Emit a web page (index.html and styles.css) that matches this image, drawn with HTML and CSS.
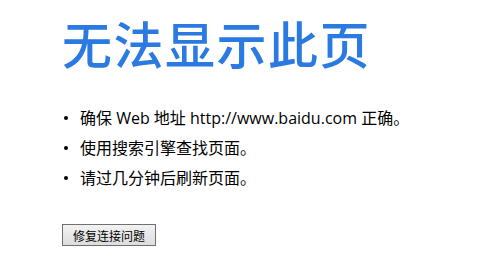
FILE: index.html
```html
<!DOCTYPE html>
<html lang="zh-CN">
<head>
<meta charset="utf-8">
<link rel="stylesheet" href="styles.css">
</head>
<body>
<main class="page">
  <h1 class="title">无法显示此页</h1>
  <ul class="tips">
    <li class="tip">确保 Web 地址 http://www.baidu.com 正确。</li>
    <li class="tip">使用搜索引擎查找页面。</li>
    <li class="tip">请过几分钟后刷新页面。</li>
  </ul>
  <button class="fix-btn" type="button">修复连接问题</button>
</main>
</body>
</html>
```
FILE: styles.css
```css
html, body {
  margin: 0;
  padding: 0;
  background: #ffffff;
}
.page {
  padding: 12px 0 0 62px;
  font-family: "Open Sans", "Noto Sans CJK SC", sans-serif;
  color: #000;
}
.title {
  margin: 0;
  font-family: "Noto Sans CJK SC", sans-serif;
  font-weight: 500;
  font-size: 50px;
  line-height: 60px;
  letter-spacing: 1.5px;
  color: #2a7ae2;
}
.tips {
  list-style: none;
  margin: 35px 0 0 0;
  padding: 0;
  display: flex;
  flex-direction: column;
  gap: 8px;
}
.tip {
  display: flex;
  align-items: center;
  font-size: 16px;
  line-height: 22px;
}
.tip::before {
  content: "";
  width: 4px;
  height: 4px;
  background: #000;
  border-radius: 50%;
  margin: 0 12px 0 2px;
  flex: none;
}
.fix-btn {
  margin-top: 35px;
  height: 22px;
  padding: 0 10px;
  font-family: "Noto Sans CJK SC", sans-serif;
  font-size: 12px;
  color: #000;
  border: 1px solid #707070;
  border-radius: 0;
  background: linear-gradient(#f2f2f2, #dddddd);
}
```
